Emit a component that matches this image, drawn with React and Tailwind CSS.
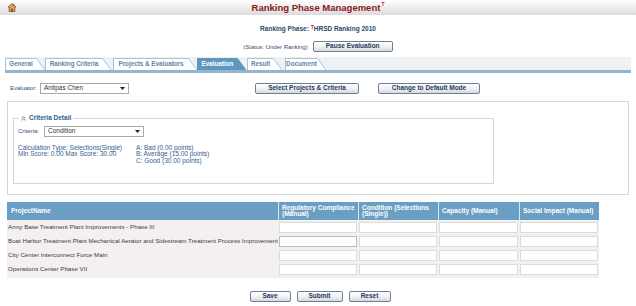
import React from "react";

const F = "font-['Liberation_Sans',Arial,sans-serif]";

function Btn({ children, w }) {
  return (
    <div
      className={`${w} h-[11px] flex items-center justify-center rounded-[2px] border border-[#6f7f92] bg-gradient-to-b from-white via-[#f0f2f4] to-[#d3d9e0] text-[6.5px] font-bold text-[#1f3a5c] leading-none`}
    >
      {children}
    </div>
  );
}

function Select({ w, text }) {
  return (
    <div className={`${w} h-[11px] flex items-center justify-between border border-[#a9a9a9] bg-white pl-[3px] pr-[3px] text-[6.5px] text-[#333] leading-none`}>
      <span>{text}</span>
      <svg width="5" height="3" viewBox="0 0 5 3"><path d="M0 0h5L2.5 3z" fill="#222" /></svg>
    </div>
  );
}

function Tab({ label, active, w }) {
  const bg = active ? "#5e98bf" : "#ffffff";
  const stroke = active ? "#5e98bf" : "#a9c3d6";
  return (
    <div className="flex items-end h-[13px]">
      <div
        className={`${w} h-[12px] flex items-center justify-center whitespace-nowrap text-[6.3px] font-bold leading-none border-t border-l ${
          active ? "bg-[#5e98bf] border-[#5e98bf] text-white" : "bg-white border-[#a9c3d6] text-[#5f84a8]"
        }`}
      >
        {label}
      </div>
      <svg width="9" height="12" viewBox="0 0 9 12" className="block">
        <path d="M0 0.5 L0.5 0.5 L9 12 L0 12 Z" fill={bg} />
        <path d="M0 0.5 L0.5 0.5 L9 12" stroke={stroke} strokeWidth="1" fill="none" />
      </svg>
    </div>
  );
}

const rows = [
  "Army Base Treatment Plant Improvements - Phase III",
  "Boat Harbor Treatment Plant Mechanical Aerator and Sidestream Treatment Process Improvement",
  "City Center Interconnect Force Main",
  "Operations Center Phase VII",
];

export default function App() {
  return (
    <div className={`w-[636px] h-[306px] bg-white overflow-hidden ${F}`}>
      {/* header */}
      <div className="h-[15px] grid grid-cols-[1fr_auto_1fr] items-center bg-gradient-to-b from-white to-[#dcdcdc]">
        <div className="pl-[8px] flex items-center">
          <svg width="8" height="9" viewBox="0 0 8 9">
            <path d="M4 0.5 L7.8 4 L6.8 4 L6.8 8.5 L1.2 8.5 L1.2 4 L0.2 4 Z" fill="#e2a457" stroke="#7a4a1e" strokeWidth="0.8" />
            <rect x="3.2" y="5.5" width="1.6" height="3" fill="#7a4a1e" />
            <rect x="5.2" y="0.8" width="1" height="2" fill="#7a4a1e" />
          </svg>
        </div>
        <div className="flex items-start text-[9.5px] font-bold text-[#8a1a1a] leading-none whitespace-nowrap">
          <span>Ranking Phase Management</span>
          <span className="text-[5px] text-[#d42020] font-bold leading-none ml-[1px] mt-[-1px]">T</span>
        </div>
        <div />
      </div>

      {/* ranking phase */}
      <div className="mt-[10px] h-[8px] flex justify-center items-center text-[6.5px] font-bold text-[#2c4a6e] leading-none whitespace-nowrap">
        Ranking Phase:&nbsp;<span className="text-[#d42020] text-[5px] relative top-[-2px]">T</span>HRSD Ranking 2010
      </div>

      {/* status */}
      <div className="mt-[8px] flex justify-center items-center gap-[5px]">
        <span className="text-[6px] text-[#2f4f72] leading-none">(Status: Under Ranking)</span>
        <Btn w="w-[80px]">Pause Evaluation</Btn>
      </div>

      {/* tabs */}
      <div className="mt-[5px] mx-[5px] h-[16px] bg-[#eef2f5] flex flex-col">
        <div className="flex items-end h-[13px]">
          <Tab label="General" w="w-[31px]" />
          <Tab label="Ranking Criteria" w="w-[57px]" />
          <div className="w-[2px]" />
          <Tab label="Projects & Evaluators" w="w-[75px]" />
          <Tab label="Evaluation" w="w-[40px]" active />
          <div className="w-[1px]" />
          <Tab label="Result" w="w-[26px]" />
          <div className="w-[3px]" />
          <Tab label="Document" w="w-[32px]" />
        </div>
        <div className="h-[3px] bg-[#93b5cd]" />
      </div>

      {/* evaluator row */}
      <div className="mt-[9px] h-[12px] flex items-center">
        <span className="ml-[10px] w-[30px] text-[6px] text-[#2f4f72] leading-none">Evaluator:</span>
        <Select w="w-[89px]" text="Antipas Chen" />
        <div className="ml-[126px]">
          <Btn w="w-[104px]">Select Projects &amp; Criteria</Btn>
        </div>
        <div className="ml-[19px]">
          <Btn w="w-[102px]">Change to Default Mode</Btn>
        </div>
      </div>

      {/* outer box */}
      <div className="mt-[7px] ml-[7px] w-[622px] h-[94px] border border-[#d6d6d6] pt-[13px] pl-[5px]">
        <fieldset className="w-[481px] h-[69px] border border-[#d6d6d6] pl-[4px]">
          <legend className="px-[2px] ml-[1px] flex items-center gap-[3px] text-[6.5px] font-bold text-[#2d5d8a] leading-none">
            <svg width="5" height="5" viewBox="0 0 5 5">
              <path d="M0.5 2.2 L2.5 0.6 L4.5 2.2 M0.5 4.4 L2.5 2.8 L4.5 4.4" stroke="#4a6f95" strokeWidth="0.8" fill="none" />
            </svg>
            Criteria Detail
          </legend>
          <div className="mt-[4px] h-[11px] flex items-center">
            <span className="w-[26px] text-[6px] text-[#2f4f72] leading-none">Criteria:</span>
            <Select w="w-[100px]" text="Condition" />
          </div>
          <div className="mt-[8px] flex text-[6.5px] text-[#37618d] leading-[6.6px]">
            <div className="w-[118px]">
              <div>Calculation Type: Selections(Single)</div>
              <div>Min Score: 0.00 Max Score: 30.00</div>
            </div>
            <div>
              <div>A: Bad (0.00 points)</div>
              <div>B: Average (15.00 points)</div>
              <div>C: Good (30.00 points)</div>
            </div>
          </div>
        </fieldset>
      </div>

      {/* table */}
      <div className="mt-[7px] ml-[7px] w-[592px]">
        <div className="h-[18px] flex bg-[#6a9ec2] text-white text-[6.5px] font-bold leading-[6.5px]">
          <div className="w-[271px] flex items-center pl-[4px]">ProjectName</div>
          <div className="w-[80px] flex items-center pl-[3px] border-l border-[#d8e6f0]">Regulatory Compliance<br />(Manual)</div>
          <div className="w-[80px] flex items-center pl-[3px] border-l border-[#d8e6f0]">Condition (Selections<br />(Single))</div>
          <div className="w-[81px] flex items-center pl-[3px] border-l border-[#d8e6f0]">Capacity (Manual)</div>
          <div className="w-[80px] flex items-center pl-[3px] border-l border-[#d8e6f0]">Social Impact (Manual)</div>
        </div>
        <div className="bg-[#f4f0f0] pb-[2px]">
          {rows.map((r, i) => (
            <div key={i} className="h-[14px] flex items-center">
              <div className="w-[271px] pl-[1px] text-[6.2px] text-[#3a3a3a] leading-none whitespace-nowrap overflow-hidden">{r}</div>
              {[80, 80, 81, 80].map((w, j) => (
                <div key={j} style={{ width: w }} className="h-[14px] flex items-center px-[1px]">
                  <div
                    className={`w-full h-[11px] bg-white border ${
                      i === 1 && j === 0 ? "border-[#a9c2dc]" : "border-[#dcdcdc]"
                    }`}
                  />
                </div>
              ))}
            </div>
          ))}
        </div>
      </div>

      {/* bottom buttons */}
      <div className="mt-[13px] flex justify-center gap-[6px] pl-[4px]">
        <Btn w="w-[41px]">Save</Btn>
        <Btn w="w-[46px]">Submit</Btn>
        <Btn w="w-[42px]">Reset</Btn>
      </div>
    </div>
  );
}
